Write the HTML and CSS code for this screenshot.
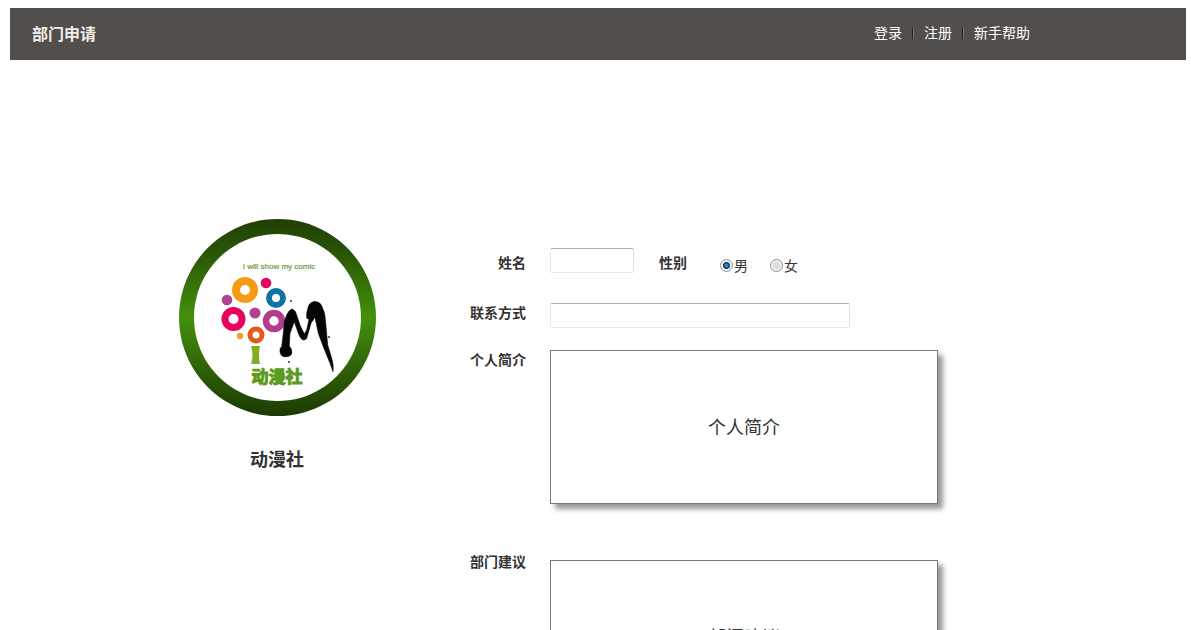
FILE: index.html
```html
<!DOCTYPE html>
<html lang="zh-CN">
<head>
<meta charset="utf-8">
<title>部门申请</title>
<link rel="stylesheet" href="styles.css">
</head>
<body>
<header class="topbar">
  <h1 class="topbar-title">部门申请</h1>
  <nav class="topbar-nav">
    <a href="#">登录</a>
    <span class="divider"></span>
    <a href="#">注册</a>
    <span class="divider"></span>
    <a href="#">新手帮助</a>
  </nav>
</header>
<main class="apply">
  <figure class="club">
    <svg class="club-logo" viewBox="0 0 200 200" role="img" aria-label="动漫社">
      <defs>
        <linearGradient id="rim" x1="0" y1="0" x2="0" y2="1">
          <stop offset="0" stop-color="#203f04"/>
          <stop offset="0.15" stop-color="#285206"/>
          <stop offset="0.5" stop-color="#43900a"/>
          <stop offset="0.85" stop-color="#285206"/>
          <stop offset="1" stop-color="#1c3a03"/>
        </linearGradient>
      </defs>
      <path fill="url(#rim)" fill-rule="evenodd" d="M99.500 1a98.500 98.500 0 1 0 .01 0ZM99.500 16a83.500 83.500 0 1 1-.01 0Z"/>
      <text class="logo-motto" x="101" y="51">I will show my comic</text>
      <g fill="none">
        <circle cx="67" cy="72" r="9" stroke="#f59a12" stroke-width="8"/>
        <circle cx="98" cy="80" r="7" stroke="#0f73a3" stroke-width="6"/>
        <circle cx="55.500" cy="101" r="8.500" stroke="#e6045f" stroke-width="7"/>
        <circle cx="96" cy="103" r="8" stroke="#b23c8e" stroke-width="6.500"/>
        <circle cx="78" cy="117" r="6" stroke="#e55b15" stroke-width="5"/>
      </g>
      <circle cx="88" cy="65" r="5.300" fill="#e6045f"/>
      <circle cx="49" cy="82" r="5.300" fill="#b0438f"/>
      <circle cx="77" cy="95" r="5.500" fill="#b0438f"/>
      <circle cx="62" cy="118" r="3.200" fill="#eda524"/>
      <path fill="#82ad1e" d="M73 128h9q-2 9 0 18h-9q3-9 0-18Z"/>
      <path fill="#050505" stroke="#050505" stroke-width="0.600" stroke-linejoin="round" d="M102 133.700Q103 139 107 138.700Q112 139 113.700 136Q114.500 131 111.300 128L112 115.300L116.300 103.700L120.300 115.300Q123 122 125.300 122Q128 122 128.700 120.300L133 105.300L137 99.300L140.300 115.300L145.300 128.700L152 145.300L155 153.700Q156 148 153.700 140.300L149.700 127L148 108.700Q147 94 145.300 92Q143 85 140.300 84.300Q137 83 135.300 83.700Q131 85 130.300 88.700Q128 95 128.700 100.300L131 101.300L128.700 112L126.300 116L122 107L117.500 93.700Q115.500 91 113.700 91Q111 92 108.700 97L106.300 103.700L105.300 115.300L103.700 128.700Q101.500 130 102 133.700Z"/>
      <circle cx="113" cy="83" r="1" fill="#333"/>
      <circle cx="111" cy="144" r="1" fill="#333"/>
      <circle cx="151" cy="119" r="1" fill="#333"/>
      <text class="logo-name" x="99" y="165">动漫社</text>
    </svg>
    <figcaption class="club-name">动漫社</figcaption>
  </figure>
  <form class="fields">
    <label class="field-label name-label" for="name">姓名</label>
    <div class="person">
      <input class="text-input name-input" id="name" type="text">
      <fieldset class="gender">
        <legend class="gender-title">性别</legend>
        <label class="choice"><input type="radio" name="gender" checked>男</label>
        <label class="choice"><input type="radio" name="gender">女</label>
      </fieldset>
    </div>
    <label class="field-label" for="contact">联系方式</label>
    <input class="text-input contact-input" id="contact" type="text">
    <label class="field-label" for="intro">个人简介</label>
    <textarea class="note" id="intro">个人简介</textarea>
    <label class="field-label" for="advice">部门建议</label>
    <textarea class="note advice" id="advice">部门建议</textarea>
  </form>
</main>
</body>
</html>
```
FILE: styles.css
```css
* {
  box-sizing: border-box;
}

html {
  scrollbar-width: none;
}

body {
  margin: 8px 5px 0 10px;
  background: #fff;
  color: #333;
  font: 14px/20px "Liberation Sans", "Noto Sans CJK SC", sans-serif;
}

.topbar {
  display: flex;
  align-items: center;
  justify-content: space-between;
  min-height: 52px;
  padding: 0 156px 0 22px;
  background: #524e4c;
}

.topbar-title {
  margin: 0;
  padding-top: 2px;
  color: #eee;
  font-size: 16px;
  line-height: 24px;
}

.topbar-nav {
  display: flex;
  align-items: center;
  gap: 10px;
  padding-bottom: 2px;
}

.topbar-nav a {
  color: #fff;
  text-decoration: none;
}

.divider {
  width: 2px;
  height: 12px;
  border-left: 1px solid #222;
  border-right: 1px solid #777;
}

.apply {
  display: flex;
  align-items: flex-start;
  gap: 92px;
  padding: 158px 0 40px 168px;
}

.club {
  flex: none;
  width: 200px;
  margin: 0;
  text-align: center;
}

.club-logo {
  display: block;
  width: 100%;
}

.logo-motto {
  fill: #669a45;
  font: 8px "Liberation Sans", sans-serif;
  stroke: #669a45;
  stroke-width: 0.2;
  text-anchor: middle;
}

.logo-name {
  fill: #5c9a20;
  stroke: #5c9a20;
  stroke-width: 1;
  font: bold 17px "Noto Sans CJK SC", sans-serif;
  text-anchor: middle;
}

.club-name {
  padding: 29px 2px 0 0;
  font-size: 18px;
  font-weight: bold;
  line-height: 26px;
}

.fields {
  display: grid;
  grid-template-columns: 56px minmax(0, 388px);
  flex: 1;
  align-items: start;
  column-gap: 24px;
  padding-top: 30px;
}

.field-label {
  font-weight: bold;
  text-align: right;
}

.name-label {
  padding-top: 5px;
}

.person {
  display: flex;
  align-items: flex-start;
  gap: 25px;
  height: 55px;
}

.text-input {
  height: 25px;
  padding: 2px 4px;
  border: 1px solid #e3e9ef;
  border-top-color: #abadb3;
  border-right-color: #dbdfe6;
  border-radius: 2px;
  outline: 0;
  font: inherit;
}

.name-input {
  width: 84px;
}

.contact-input {
  width: 300px;
  max-width: 100%;
  margin-bottom: 22px;
}

.gender {
  display: flex;
  margin: 0;
  padding: 5px 0 0;
  border: 0;
}

.gender-title {
  float: left;
  margin-right: 33px;
  padding: 0;
  font-weight: bold;
}

.choice {
  display: flex;
  align-items: center;
  gap: 1px;
  margin-right: 22px;
  padding-top: 3px;
}

.choice input {
  width: 13px;
  height: 13px;
  margin: 0 0 2px;
  border: 1px solid #8e8f8f;
  border-radius: 50%;
  background: radial-gradient(circle, #ddd 0 3px, #f4f4f4 5px);
  appearance: none;
}

.choice input:checked {
  background: radial-gradient(circle, #2f8fc4 0 1px, #12305a 3px, #f4f4f4 4px);
}

.note {
  display: block;
  width: 100%;
  height: 154px;
  margin-bottom: 48px;
  padding: 63px 8px 0;
  border: 1px solid #777;
  border-radius: 0;
  box-shadow: 5px 5px 5px #999;
  outline: 0;
  background: #fff;
  color: #333;
  font: 18px/28px "Liberation Sans", "Noto Sans CJK SC", sans-serif;
  text-align: center;
  resize: none;
}

.advice {
  margin: 8px 0 0;
}
```
